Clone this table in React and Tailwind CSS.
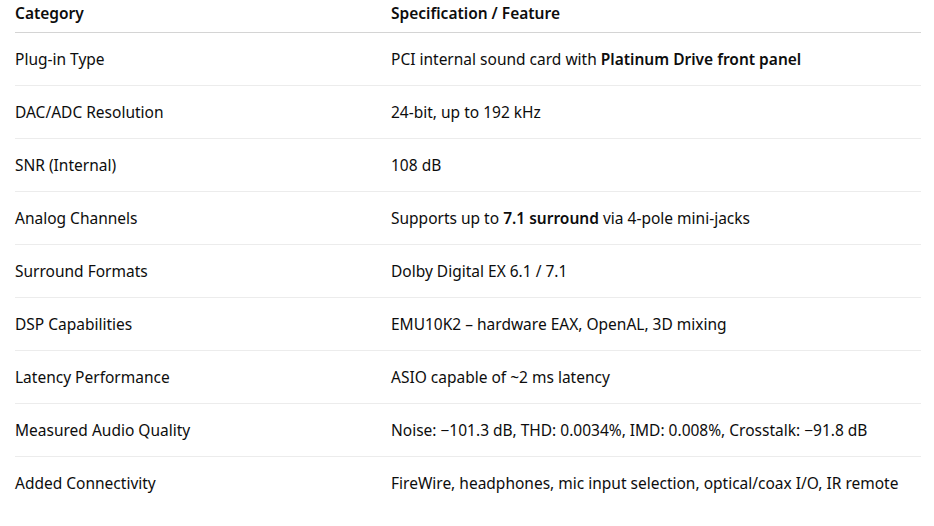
const ROWS = [
  ['Plug-in Type', <>PCI internal sound card with <strong className="font-semibold">Platinum Drive front panel</strong></>],
  ['DAC/ADC Resolution', '24-bit, up to 192 kHz'],
  ['SNR (Internal)', '108 dB'],
  ['Analog Channels', <>Supports up to <strong className="font-semibold">7.1 surround</strong> via 4-pole mini-jacks</>],
  ['Surround Formats', 'Dolby Digital EX 6.1 / 7.1'],
  ['DSP Capabilities', 'EMU10K2 – hardware EAX, OpenAL, 3D mixing'],
  ['Latency Performance', 'ASIO capable of ~2 ms latency'],
  ['Measured Audio Quality', 'Noise: −101.3 dB, THD: 0.0034%, IMD: 0.008%, Crosstalk: −91.8 dB'],
  ['Added Connectivity', 'FireWire, headphones, mic input selection, optical/coax I/O, IR remote'],
];

export default function App() {
  return (
    <div className="bg-white min-h-screen pl-[15px] pr-[13px] text-[#0d0d0d] text-[15.5px] leading-6 font-['Noto_Sans','Liberation_Sans',sans-serif]">
      <table className="w-full border-collapse">
        <thead>
          <tr className="border-b border-[#d4d4d4]">
            <th className="w-[376px] text-left font-semibold pt-[1px] pb-[7px]">Category</th>
            <th className="text-left font-semibold pt-[1px] pb-[7px]">Specification / Feature</th>
          </tr>
        </thead>
        <tbody>
          {ROWS.map(([cat, spec], i) => (
            <tr key={i} className={i < ROWS.length - 1 ? 'border-b border-[#ececec]' : ''}>
              <td className="py-[14px]">{cat}</td>
              <td className="py-[14px]">{spec}</td>
            </tr>
          ))}
        </tbody>
      </table>
    </div>
  );
}
